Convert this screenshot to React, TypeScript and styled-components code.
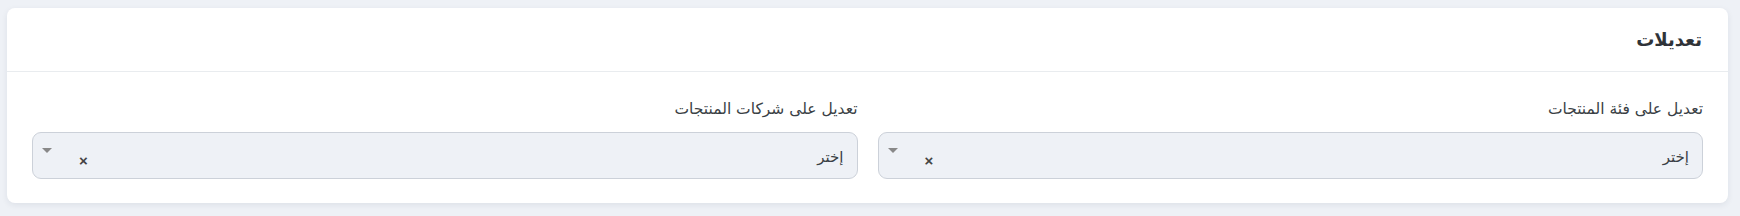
import styled, { createGlobalStyle } from "styled-components";

const GlobalStyle = createGlobalStyle`
  html, body {
    margin: 0;
    padding: 0;
    background: #eef1f6;
    font-family: "DejaVu Sans", "Noto Sans", sans-serif;
  }
`;

const Page = styled.div`
  padding: 8px 12px 12px 7px;
  height: 216px;
  box-sizing: border-box;
`;

const Card = styled.section`
  direction: rtl;
  background: #fff;
  border-radius: 8px;
  box-shadow: 0 2px 6px rgba(30, 40, 70, 0.08);
  height: 195px;
  box-sizing: border-box;
`;

const CardHeader = styled.header`
  height: 64px;
  display: flex;
  align-items: center;
  padding: 0 26px;
  border-bottom: 1px solid #e9ecef;
  box-sizing: border-box;
`;

const Title = styled.h5`
  margin: 0;
  font-size: 18px;
  font-weight: 700;
  color: #2f3338;
`;

const CardBody = styled.div`
  display: grid;
  grid-template-columns: 1fr 1fr;
  column-gap: 20px;
  padding: 27px 25px 0;
`;

const Field = styled.div`
  display: flex;
  flex-direction: column;
`;

const Label = styled.label`
  font-size: 15.5px;
  color: #3a3f45;
  line-height: 20px;
  margin-bottom: 13px;
`;

const SelectBox = styled.div`
  position: relative;
  height: 47px;
  box-sizing: border-box;
  background: #eef1f6;
  border: 1px solid #ccd1d9;
  border-radius: 9px;
  display: flex;
  align-items: center;
  padding: 0 13px;
`;

const Placeholder = styled.span`
  font-size: 15px;
  color: #3a3f45;
  margin-top: 2px;
`;

const Arrow = styled.span`
  position: absolute;
  left: 9px;
  top: 15px;
  width: 0;
  height: 0;
  border-left: 5px solid transparent;
  border-right: 5px solid transparent;
  border-top: 5px solid #888;
`;

const Clear = styled.span`
  position: absolute;
  left: 46px;
  top: 21px;
  font-size: 15px;
  font-weight: 700;
  line-height: 14px;
  color: #444;
  font-family: "Liberation Sans", sans-serif;
`;

const fields = ["تعديل على فئة المنتجات", "تعديل على شركات المنتجات"];

export default function App() {
  return (
    <>
      <GlobalStyle />
      <Page>
        <Card>
          <CardHeader>
            <Title>تعديلات</Title>
          </CardHeader>
          <CardBody>
            {fields.map((label) => (
              <Field key={label}>
                <Label>{label}</Label>
                <SelectBox>
                  <Placeholder>إختر</Placeholder>
                  <Clear>×</Clear>
                  <Arrow />
                </SelectBox>
              </Field>
            ))}
          </CardBody>
        </Card>
      </Page>
    </>
  );
}
